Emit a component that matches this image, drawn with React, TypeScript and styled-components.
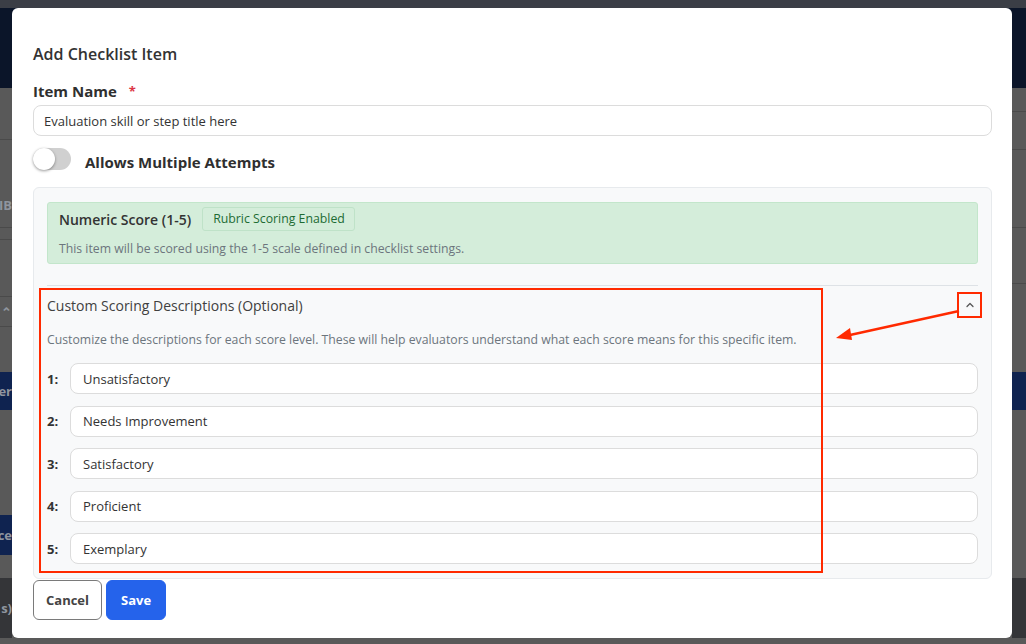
import React from "react";
import styled, { createGlobalStyle } from "styled-components";

const GlobalStyle = createGlobalStyle`
  html, body {
    margin: 0;
    padding: 0;
    width: 1026px;
    height: 644px;
    overflow: hidden;
    font-family: "Open Sans", "Liberation Sans", sans-serif;
  }
  * { box-sizing: border-box; }
`;

const levels = [
  "Unsatisfactory",
  "Needs Improvement",
  "Satisfactory",
  "Proficient",
  "Exemplary",
];

const Page = styled.div`
  position: relative;
  width: 1026px;
  height: 644px;
  display: flex;
  flex-direction: column;
  background: #595959;
`;

const TopStrip = styled.div`
  height: 8px;
  background: #3b3e46;
`;

const NavBar = styled.div`
  height: 80px;
  background: #0b1529;
`;

const Body = styled.div`
  flex: 1;
  display: grid;
  grid-template-columns: 12px 1fr 14px;
`;

const Side = styled.div`
  display: flex;
  flex-direction: column;
  overflow: hidden;
`;

const Band = styled.div<{ h: number; bg?: string; line?: boolean }>`
  height: ${({ h }) => h}px;
  flex-shrink: 0;
  background: ${({ bg }) => bg || "transparent"};
  border-bottom: ${({ line }) => (line ? "1px solid #4a4a4a" : "none")};
  display: flex;
  align-items: center;
  justify-content: flex-end;
  white-space: nowrap;
  font-size: 13px;
  font-weight: 700;
  color: #8f959f;
`;

const Overlay = styled.div`
  position: absolute;
  inset: 0;
  padding: 8px 14px 6px 12px;
  display: flex;
`;

const Modal = styled.div`
  flex: 1;
  background: #fff;
  border-radius: 6px;
  padding: 36px 20px 0 21px;
  display: flex;
  flex-direction: column;
`;

const Title = styled.h2`
  margin: 0 0 17px;
  font-size: 16px;
  font-weight: 600;
  color: #333;
  line-height: 20px;
`;

const FieldLabel = styled.label`
  display: flex;
  gap: 10px;
  font-size: 15px;
  font-weight: 700;
  color: #2f2f2f;
  line-height: 20px;
  margin-bottom: 4px;
`;

const Required = styled.span`
  color: #dc3545;
  font-size: 13px;
  margin-left: 2px;
`;

const TextInput = styled.input`
  width: 100%;
  height: 31px;
  border: 1px solid #dcdcdc;
  border-radius: 8px;
  padding: 0 10px;
  font-family: inherit;
  font-size: 13px;
  color: #333;
  background: #fff;
  outline: none;
`;

const ToggleRow = styled.div`
  display: flex;
  align-items: center;
  gap: 14px;
  height: 22px;
  margin: 12px 0 17px;
`;

const Track = styled.div`
  position: relative;
  width: 38px;
  height: 22px;
  border-radius: 11px;
  background: #d0d0d0;
`;

const Knob = styled.div`
  position: absolute;
  left: 0;
  top: 0;
  width: 22px;
  height: 22px;
  border-radius: 50%;
  background: #fff;
  box-shadow: 0 1px 3px rgba(0, 0, 0, 0.4);
`;

const ToggleText = styled.span`
  font-size: 15px;
  font-weight: 700;
  color: #2f2f2f;
  line-height: 16px;
  padding-top: 6px;
`;

const Panel = styled.div`
  background: #f8f9fa;
  border: 1px solid #e7eaed;
  border-radius: 6px;
  padding: 14px 13px 14px 13px;
`;

const Alert = styled.div`
  background: #d4edda;
  border: 1px solid #c3e6cb;
  border-radius: 3px;
  padding: 4px 11px 5px;
`;

const AlertHead = styled.div`
  display: flex;
  align-items: center;
  gap: 11px;
`;

const AlertTitle = styled.span`
  font-size: 14px;
  font-weight: 600;
  color: #333;
`;

const Badge = styled.span`
  border: 1px solid #bfe2c8;
  border-radius: 3px;
  padding: 2px 9px 2px 10px;
  font-size: 12.3px;
  color: #1d6b33;
  line-height: 18px;
`;

const Muted = styled.p`
  margin: 0;
  font-size: 12.25px;
  color: #6c757d;
  line-height: 18px;
`;

const AlertText = styled(Muted)`
  margin-top: 9px;
`;

const Divider = styled.div`
  height: 1px;
  background: #dee2e6;
  margin: 21px 0 0;
`;

const Section = styled.div`
  position: relative;
`;

const SectionHead = styled.div`
  display: flex;
  align-items: center;
  justify-content: space-between;
  height: 38px;
`;

const SectionTitle = styled.span`
  font-size: 14px;
  color: #404040;
`;

const Chevron = styled.button`
  border: none;
  background: none;
  padding: 0;
  margin-right: 2px;
  display: flex;
  color: #555;
`;

const SectionText = styled(Muted)`
  margin: 7px 0 14px;
`;

const Rows = styled.div`
  display: flex;
  flex-direction: column;
  gap: 11.5px;
`;

const Row = styled.div`
  display: flex;
  align-items: center;
  gap: 9px;
`;

const RowLabel = styled.span`
  width: 14px;
  font-size: 13px;
  font-weight: 700;
  color: #333;
`;

const RowInput = styled(TextInput)`
  flex: 1;
  padding: 0 12px;
`;

const Mark = styled.div`
  position: absolute;
  border: 2px solid #ff2a00;
  pointer-events: none;
`;

const MainMark = styled(Mark)`
  left: -8px;
  top: 2px;
  width: 784px;
  height: 285px;
`;

const IconMark = styled(Mark)`
  right: -4px;
  top: 6px;
  width: 25px;
  height: 26px;
`;

const Arrow = styled.svg`
  position: absolute;
  left: 789px;
  top: 22px;
  pointer-events: none;
`;

const Actions = styled.div`
  display: flex;
  gap: 4px;
  margin-top: 1px;
`;

const Button = styled.button<{ primary?: boolean }>`
  height: 40px;
  padding: 0 ${({ primary }) => (primary ? "14px" : "12px")};
  border-radius: 6px;
  font-family: inherit;
  font-size: 13px;
  font-weight: 700;
  cursor: pointer;
  border: 1px solid ${({ primary }) => (primary ? "#2563eb" : "#7a7a7a")};
  background: ${({ primary }) => (primary ? "#2563eb" : "#fff")};
  color: ${({ primary }) => (primary ? "#fff" : "#444")};
`;

const Backdrop = () => (
  <Body>
    <Side>
      <Band h={52} line />
      <Band h={50} />
      <Band h={30}>IB</Band>
      <Band h={8} line />
      <Band h={12} line />
      <Band h={57} line />
      <Band h={30} line>⌃</Band>
      <Band h={45} />
      <Band h={38} bg="#0f2350">er</Band>
      <Band h={105} />
      <Band h={40} bg="#0f2350">ce</Band>
      <Band h={23} />
      <Band h={60} bg="#343538">s)</Band>
    </Side>
    <div />
    <Side>
      <Band h={24} line />
      <Band h={38} line />
      <Band h={78} line />
      <Band h={56} line />
      <Band h={88} />
      <Band h={38} bg="#0f2350" />
      <Band h={168} />
      <Band h={60} bg="#343538" />
    </Side>
  </Body>
);

export default function App() {
  return (
    <>
      <GlobalStyle />
      <Page>
        <TopStrip />
        <NavBar />
        <Backdrop />
        <Overlay>
          <Modal>
            <Title>Add Checklist Item</Title>
            <FieldLabel>
              Item Name <Required>*</Required>
            </FieldLabel>
            <TextInput defaultValue="Evaluation skill or step title here" />
            <ToggleRow>
              <Track>
                <Knob />
              </Track>
              <ToggleText>Allows Multiple Attempts</ToggleText>
            </ToggleRow>
            <Panel>
              <Alert>
                <AlertHead>
                  <AlertTitle>Numeric Score (1-5)</AlertTitle>
                  <Badge>Rubric Scoring Enabled</Badge>
                </AlertHead>
                <AlertText>
                  This item will be scored using the 1-5 scale defined in checklist settings.
                </AlertText>
              </Alert>
              <Divider />
              <Section>
                <SectionHead>
                  <SectionTitle>Custom Scoring Descriptions (Optional)</SectionTitle>
                  <Chevron aria-label="Collapse">
                    <svg width="12" height="12" viewBox="0 0 24 24" fill="none" stroke="currentColor" strokeWidth="2.5" strokeLinecap="round" strokeLinejoin="round">
                      <path d="M6 15l6-6 6 6" />
                    </svg>
                  </Chevron>
                </SectionHead>
                <SectionText>
                  Customize the descriptions for each score level. These will help evaluators understand what each score means for this specific item.
                </SectionText>
                <Rows>
                  {levels.map((l, i) => (
                    <Row key={l}>
                      <RowLabel>{i + 1}:</RowLabel>
                      <RowInput defaultValue={l} />
                    </Row>
                  ))}
                </Rows>
                <MainMark />
                <IconMark />
                <Arrow width="124" height="34" viewBox="0 0 124 34">
                  <line x1="123" y1="3" x2="14" y2="27" stroke="#ff2a00" strokeWidth="2.5" />
                  <polygon points="0,30 14,20 16,32" fill="#ff2a00" />
                </Arrow>
              </Section>
            </Panel>
            <Actions>
              <Button>Cancel</Button>
              <Button primary>Save</Button>
            </Actions>
          </Modal>
        </Overlay>
      </Page>
    </>
  );
}
